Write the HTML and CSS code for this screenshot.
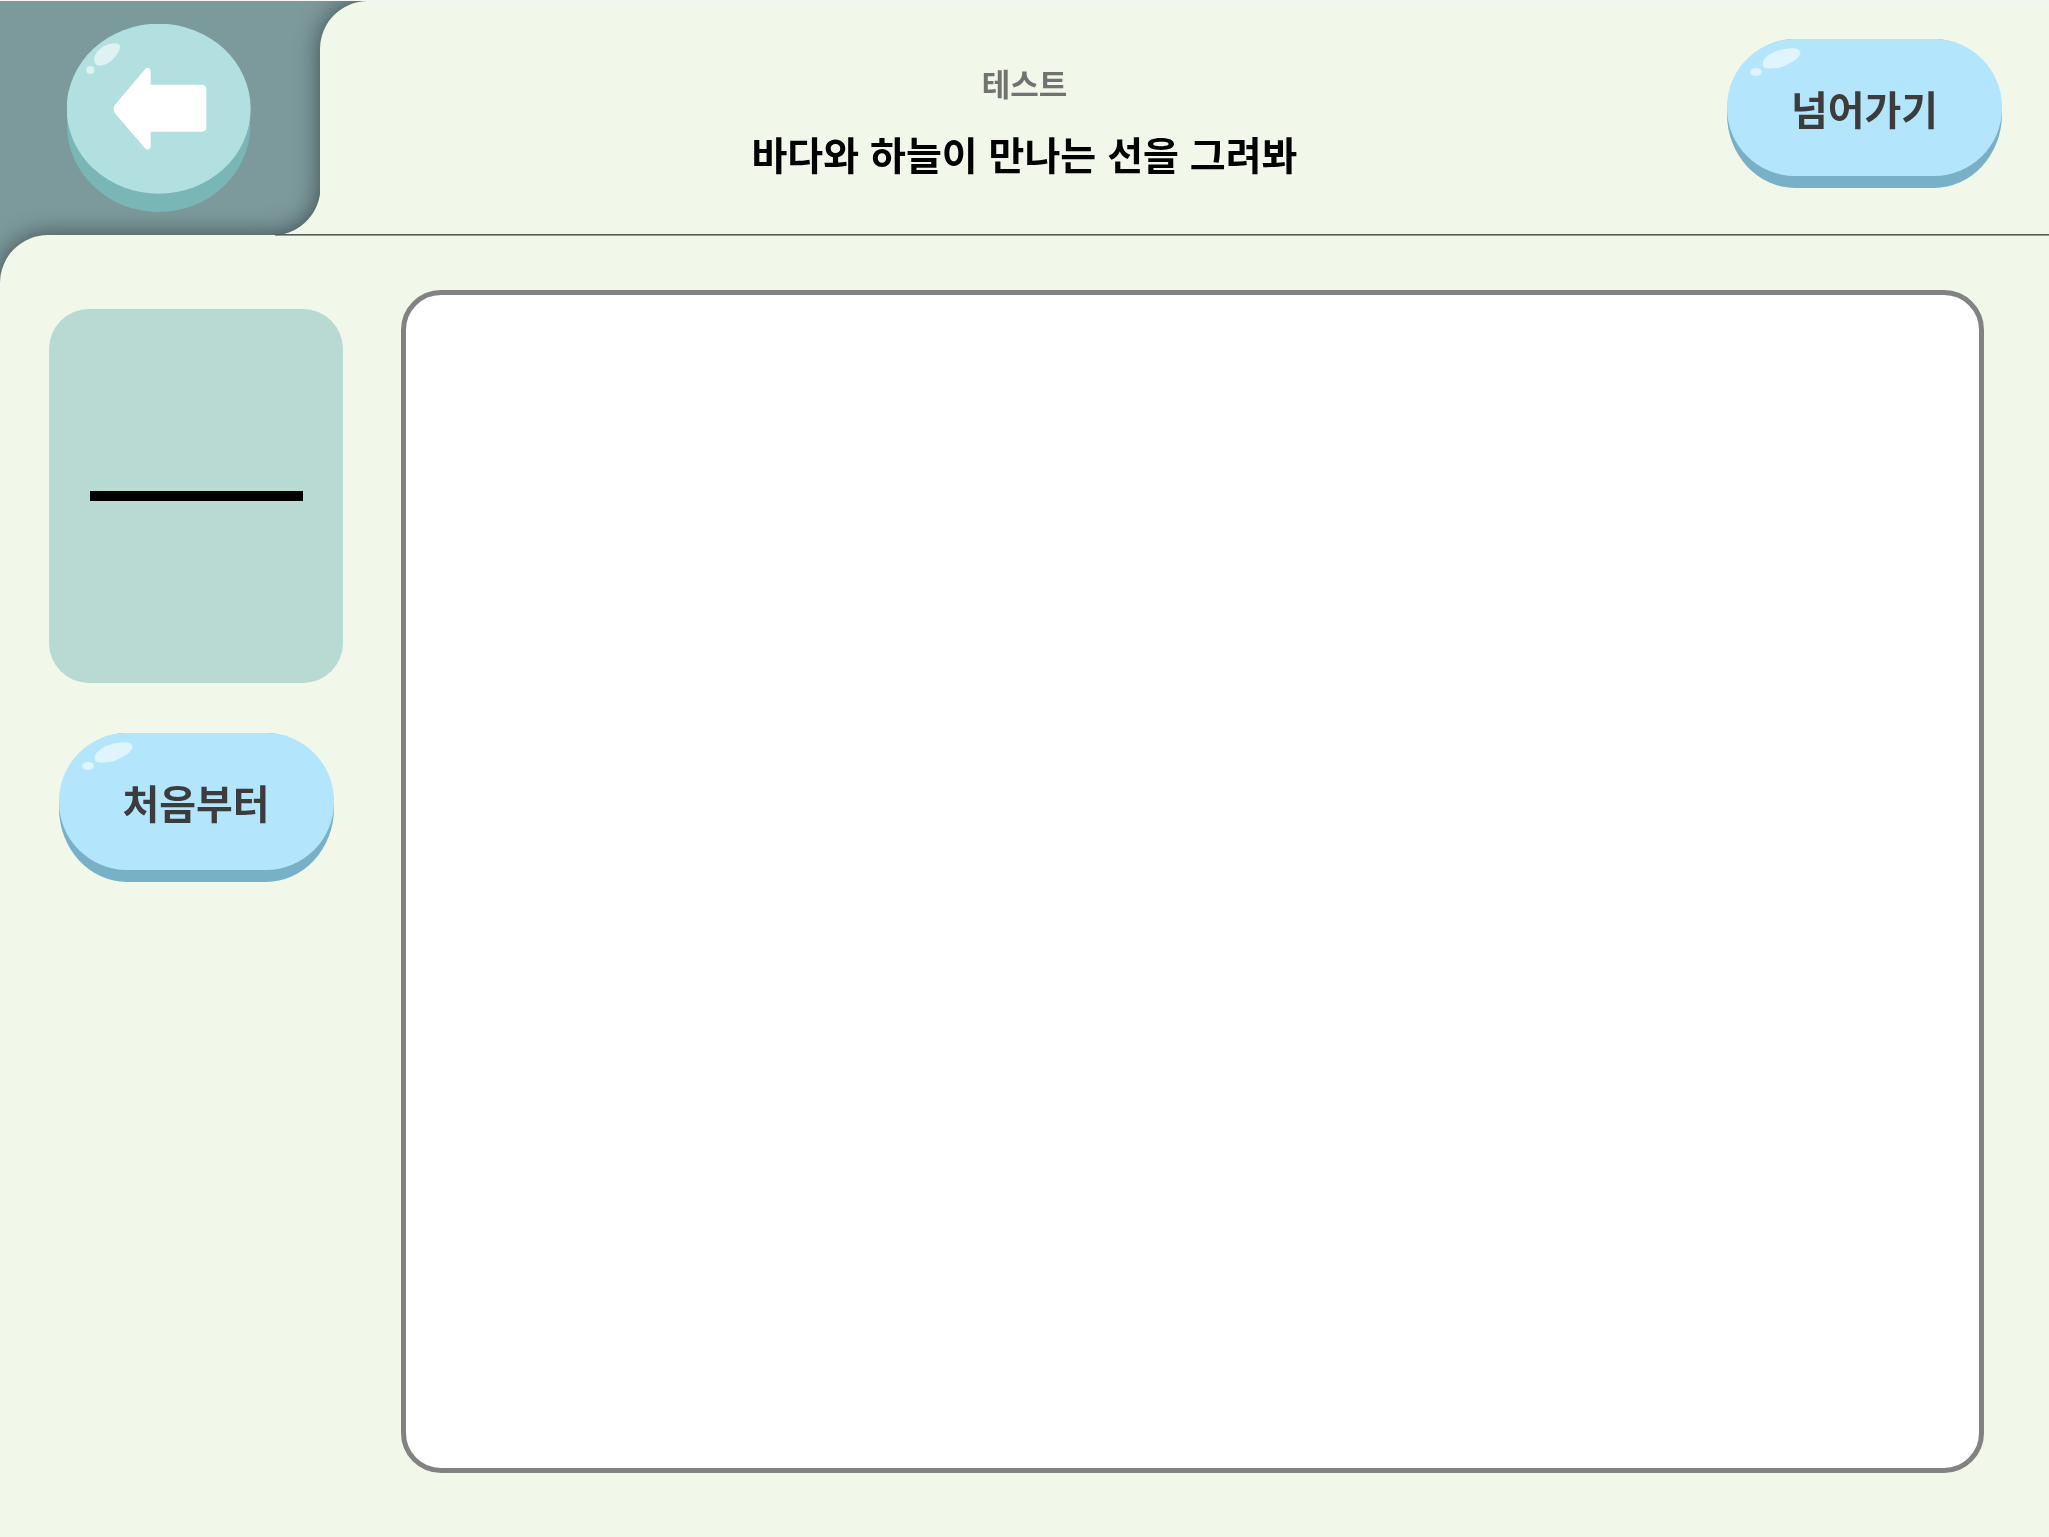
FILE: index.html
```html
<!DOCTYPE html>
<html lang="ko">
<head>
<meta charset="utf-8">
<meta name="viewport" content="width=device-width, initial-scale=1">
<title>테스트</title>
<link rel="stylesheet" href="styles.css">
</head>
<body>
<div class="page">
  <nav class="back">
    <button class="back-button" type="button" aria-label="뒤로">
      <svg viewBox="200 72 552 564" aria-hidden="true">
        <ellipse cx="475" cy="376" rx="275" ry="260" fill="#7ab6b6"/>
        <ellipse cx="475" cy="326" rx="276" ry="255" fill="#b2e0e0"/>
        <path d="M284 189C276 172 290 151 310 139C329 128 353 126 358 136C362 147 350 167 333 182C315 197 292 203 284 189Z" fill="#dff2f2"/>
        <ellipse cx="270" cy="210" rx="12" ry="12" fill="#dff2f2"/>
        <path d="M344 314L434 208C440 201 451 204 451 214V254H604Q618 254 618 268V381Q618 395 604 395H451V439C451 449 440 452 434 445L344 340Q336 327 344 314Z" fill="#fff"/>
      </svg>
    </button>
  </nav>
  <div class="sheet">
    <header class="topbar">
      <div class="heading">
        <p class="category">테스트</p>
        <h1 class="prompt">바다와 하늘이 만나는 선을 그려봐</h1>
      </div>
      <div class="skip">
        <button class="pill" type="button">
          <span class="pill-face">넘어가기</span>
          <svg class="gloss" viewBox="0 0 66 36" aria-hidden="true">
            <path d="M28 26C26 20 33 14 42 11C52 8 62 7 65 11C67 15 62 20 55 23C50 26 46 28 41 28C34 29 29 29 28 26Z"/>
            <ellipse cx="21" cy="32" rx="6" ry="4"/>
          </svg>
        </button>
      </div>
    </header>
    <hr class="divider">
    <main class="workspace">
      <aside class="sidebar">
        <div class="sample">
          <svg class="stroke" viewBox="0 0 213 10" role="img" aria-label="가로선"><rect width="213" height="10"/></svg>
        </div>
        <button class="pill" type="button">
          <span class="pill-face">처음부터</span>
          <svg class="gloss" viewBox="0 0 66 36" aria-hidden="true">
            <path d="M28 26C26 20 33 14 42 11C52 8 62 7 65 11C67 15 62 20 55 23C50 26 46 28 41 28C34 29 29 29 28 26Z"/>
            <ellipse cx="21" cy="32" rx="6" ry="4"/>
          </svg>
        </button>
      </aside>
      <canvas class="board" aria-label="그림판"></canvas>
    </main>
  </div>
</div>
</body>
</html>
```
FILE: styles.css
```css
* {
  box-sizing: border-box;
}

body {
  margin: 0;
  font-family: "Noto Sans CJK KR", sans-serif;
  background: #f1f7e9;
}

button {
  padding: 0;
  border: 0;
  background: none;
  font: inherit;
  cursor: pointer;
}

.page {
  display: grid;
  grid-template-columns: 320px 1fr;
  grid-template-rows: 234px 1fr;
  min-height: 100vh;
  border-top: 1px solid #f5f7f3;
  background: #7c999c;
  overflow: hidden;
}

.back {
  grid-area: 1 / 1;
  z-index: 1;
  padding: 23px 0 0 67px;
}

.back-button,
.back-button svg {
  display: block;
  width: 184px;
  height: 188px;
}

/* One shadow for the joined outline of the top bar and the workspace. */
.sheet {
  grid-area: 1 / 1 / -1 / -1;
  display: flex;
  flex-direction: column;
  filter: drop-shadow(0 0 12px rgba(0, 0, 0, 0.5));
}

.topbar {
  position: relative;
  display: flex;
  height: 234px;
  margin-left: 320px;
  padding-right: 47px;
  border-radius: 48px 0 0 0;
  background: #f1f7e9;
}

/* Rounds the inner corner where the top bar meets the workspace. */
.topbar::before {
  content: "";
  position: absolute;
  right: 100%;
  bottom: 0;
  width: 48px;
  height: 48px;
  background: radial-gradient(circle at 0 0, transparent 48px, #f1f7e9 49px);
}

.heading {
  flex: 1;
  padding-top: 58px;
  text-align: center;
}

.category,
.prompt {
  margin: 0;
  font-weight: 700;
}

.category {
  margin-bottom: 20px;
  font-size: 31px;
  line-height: 48px;
  color: #727272;
}

.prompt {
  font-size: 39px;
  line-height: 52px;
  color: #000;
}

.skip {
  display: flex;
  justify-content: flex-end;
  align-items: flex-start;
  width: 273px;
  padding-top: 38px;
}

.pill {
  position: relative;
  flex: none;
  display: block;
  width: 275px;
  padding-bottom: 12px;
  border-radius: 68px / 74px;
  background: #78b0c8;
}

.pill-face {
  display: flex;
  align-items: center;
  justify-content: center;
  height: 137px;
  border-radius: 68px;
  background: #b3e5fc;
  font-size: 40px;
  font-weight: 700;
  line-height: 52px;
  color: #3c3c3c;
}

.gloss {
  position: absolute;
  top: 1px;
  left: 8px;
  width: 66px;
  height: 36px;
  fill: #e0f4fe;
}

.divider {
  position: relative;
  z-index: 1;
  flex: none;
  height: 2px;
  margin: -1px 0 -1px 275px;
  border: 0;
  background: linear-gradient(#565956 50%, #969a91 50%);
}

.workspace {
  flex: 1;
  display: flex;
  gap: 58px;
  padding: 55px 65px 64px 49px;
  border-radius: 48px 0 0 0;
  background: #f1f7e9;
}

.sidebar {
  flex: none;
  display: flex;
  flex-direction: column;
  align-items: center;
  gap: 50px;
  width: 294px;
  padding-top: 19px;
}

.sample {
  display: flex;
  align-items: center;
  justify-content: center;
  width: 100%;
  height: 374px;
  border-radius: 40px;
  background: #b9dad3;
}

.stroke {
  width: 213px;
  height: 10px;
}

.board {
  flex: 1;
  min-width: 0;
  border: 5px solid #828282;
  border-radius: 40px;
  background: #fff;
}
```
